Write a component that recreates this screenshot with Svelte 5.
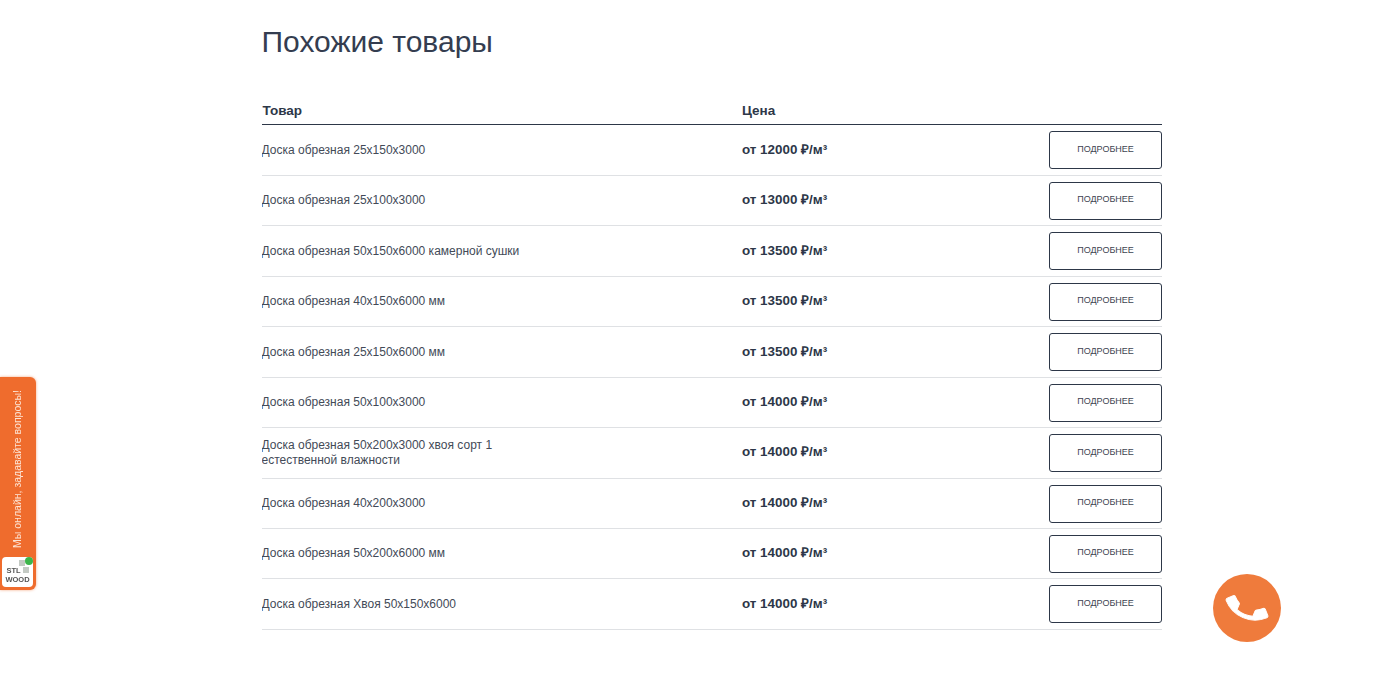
<script>
  const rows = [
    ['Доска обрезная 25х150х3000', 'от 12000 ₽/м³'],
    ['Доска обрезная 25х100х3000', 'от 13000 ₽/м³'],
    ['Доска обрезная 50х150х6000 камерной сушки', 'от 13500 ₽/м³'],
    ['Доска обрезная 40х150х6000 мм', 'от 13500 ₽/м³'],
    ['Доска обрезная 25х150х6000 мм', 'от 13500 ₽/м³'],
    ['Доска обрезная 50х100х3000', 'от 14000 ₽/м³'],
    ['Доска обрезная 50х200х3000 хвоя сорт 1 естественной влажности', 'от 14000 ₽/м³'],
    ['Доска обрезная 40х200х3000', 'от 14000 ₽/м³'],
    ['Доска обрезная 50х200х6000 мм', 'от 14000 ₽/м³'],
    ['Доска обрезная Хвоя 50х150х6000', 'от 14000 ₽/м³']
  ];
</script>

<main class="page">
  <h2 class="title">Похожие товары</h2>
  <div class="table">
    <div class="head">
      <div class="c-name">Товар</div>
      <div class="c-price">Цена</div>
    </div>
    <div class="body">
      {#each rows as r}
        <div class="row">
          <div class="c-name name">{r[0]}</div>
          <div class="c-price price">{r[1]}</div>
          <div class="c-btn"><span class="btn">ПОДРОБНЕЕ</span></div>
        </div>
      {/each}
    </div>
  </div>
</main>

<aside class="chat">
  <div class="chat-text">Мы онлайн, задавайте вопросы!</div>
  <div class="logo">
    <span class="leaf one"></span>
    <span class="dot"></span>
    <div class="logo-text">STL <span class="leaf two"></span><br />WOOD</div>
  </div>
</aside>

<div class="call">
  <svg viewBox="0 0 24 24" width="44" height="44" aria-hidden="true">
    <path fill="#fff" stroke="#fff" stroke-width="0.5" stroke-linejoin="round" transform="rotate(-22 12 12)" d="M6.62 10.79c1.44 2.83 3.76 5.14 6.59 6.59l2.2-2.2c.27-.27.67-.36 1.02-.24 1.12.37 2.33.57 3.57.57.55 0 1 .45 1 1V20c0 .55-.45 1-1 1-9.39 0-17-7.61-17-17 0-.55.45-1 1-1h3.5c.55 0 1 .45 1 1 0 1.25.2 2.45.57 3.57.11.35.03.74-.25 1.02l-2.2 2.2z"/>
  </svg>
</div>

<style>
  :global(body) {
    margin: 0;
    background: #fff;
    font-family: "Liberation Sans", Arial, sans-serif;
    color: #2d3748;
  }
  .page {
    width: 900px;
    margin-left: 262px;
    padding-top: 24px;
    height: 668px;
    overflow: hidden;
  }
  .title {
    margin: 0;
    font-size: 30px;
    line-height: 36px;
    font-weight: 400;
    color: #343d50;
    margin-left: -0.5px;
  }
  .head {
    display: flex;
    margin-top: 38px;
    height: 27px;
    padding-bottom: 1px;
    box-sizing: border-box;
    align-items: center;
    border-bottom: 1px solid #2d3748;
    font-size: 13.5px;
    font-weight: 700;
  }
  .body { padding-top: 0.55px; }
  .c-name {
    width: 480px;
    flex: none;
    box-sizing: border-box;
  }
  .head .c-name { padding-left: 0.5px; }
  .row {
    display: flex;
    align-items: center;
    height: 50.45px;
    box-sizing: border-box;
    border-bottom: 1px solid #dfe1e4;
  }
  .name {
    font-size: 12px;
    line-height: 15px;
    color: #434a57;
    padding-right: 220px;
    margin-left: -0.5px;
  }
  .price {
    font-size: 13.4px;
    font-weight: 700;
    color: #2d3748;
    flex: 1;
    padding-bottom: 3px;
    margin-left: 0.5px;
  }
  .c-btn { flex: none; margin-top: 0.4px; }
  .btn {
    display: flex;
    align-items: center;
    justify-content: center;
    width: 113px;
    height: 38px;
    padding-bottom: 3px;
    box-sizing: border-box;
    border: 1px solid #2d3748;
    border-radius: 3px;
    font-size: 9px;
    color: #3d4451;
  }
  .chat {
    position: fixed;
    left: 0;
    top: 377px;
    width: 36px;
    height: 213px;
    background: #ef6c2d;
    border-radius: 0 6px 6px 0;
    box-shadow: 0 0 3px rgba(239, 108, 45, .6);
  }
  .chat-text {
    position: absolute;
    left: 10px;
    bottom: 42px;
    writing-mode: vertical-rl;
    transform: rotate(180deg);
    font-size: 10.5px;
    line-height: 15px;
    color: #fde3d3;
    white-space: nowrap;
  }
  .logo {
    position: absolute;
    left: 2px;
    top: 180px;
    width: 31px;
    height: 30px;
    background: #fff;
    border-radius: 4px;
  }
  .dot {
    position: absolute;
    right: 0;
    top: 0;
    width: 8px;
    height: 8px;
    border-radius: 50%;
    background: #3cb54a;
  }
  .leaf {
    display: inline-block;
    width: 6px;
    height: 6px;
    background: #c4cac4;
  }
  .leaf.one {
    position: absolute;
    left: 17px;
    top: 3px;
  }
  .logo-text {
    position: absolute;
    left: 0;
    right: 0;
    top: 9px;
    text-align: center;
    font-size: 7.5px;
    line-height: 9px;
    font-weight: 700;
    color: #555;
  }
  .call {
    position: fixed;
    left: 1213px;
    top: 574px;
    width: 68px;
    height: 68px;
    border-radius: 50%;
    background: #ef7b3c;
    display: flex;
    align-items: center;
    justify-content: center;
  }
</style>
